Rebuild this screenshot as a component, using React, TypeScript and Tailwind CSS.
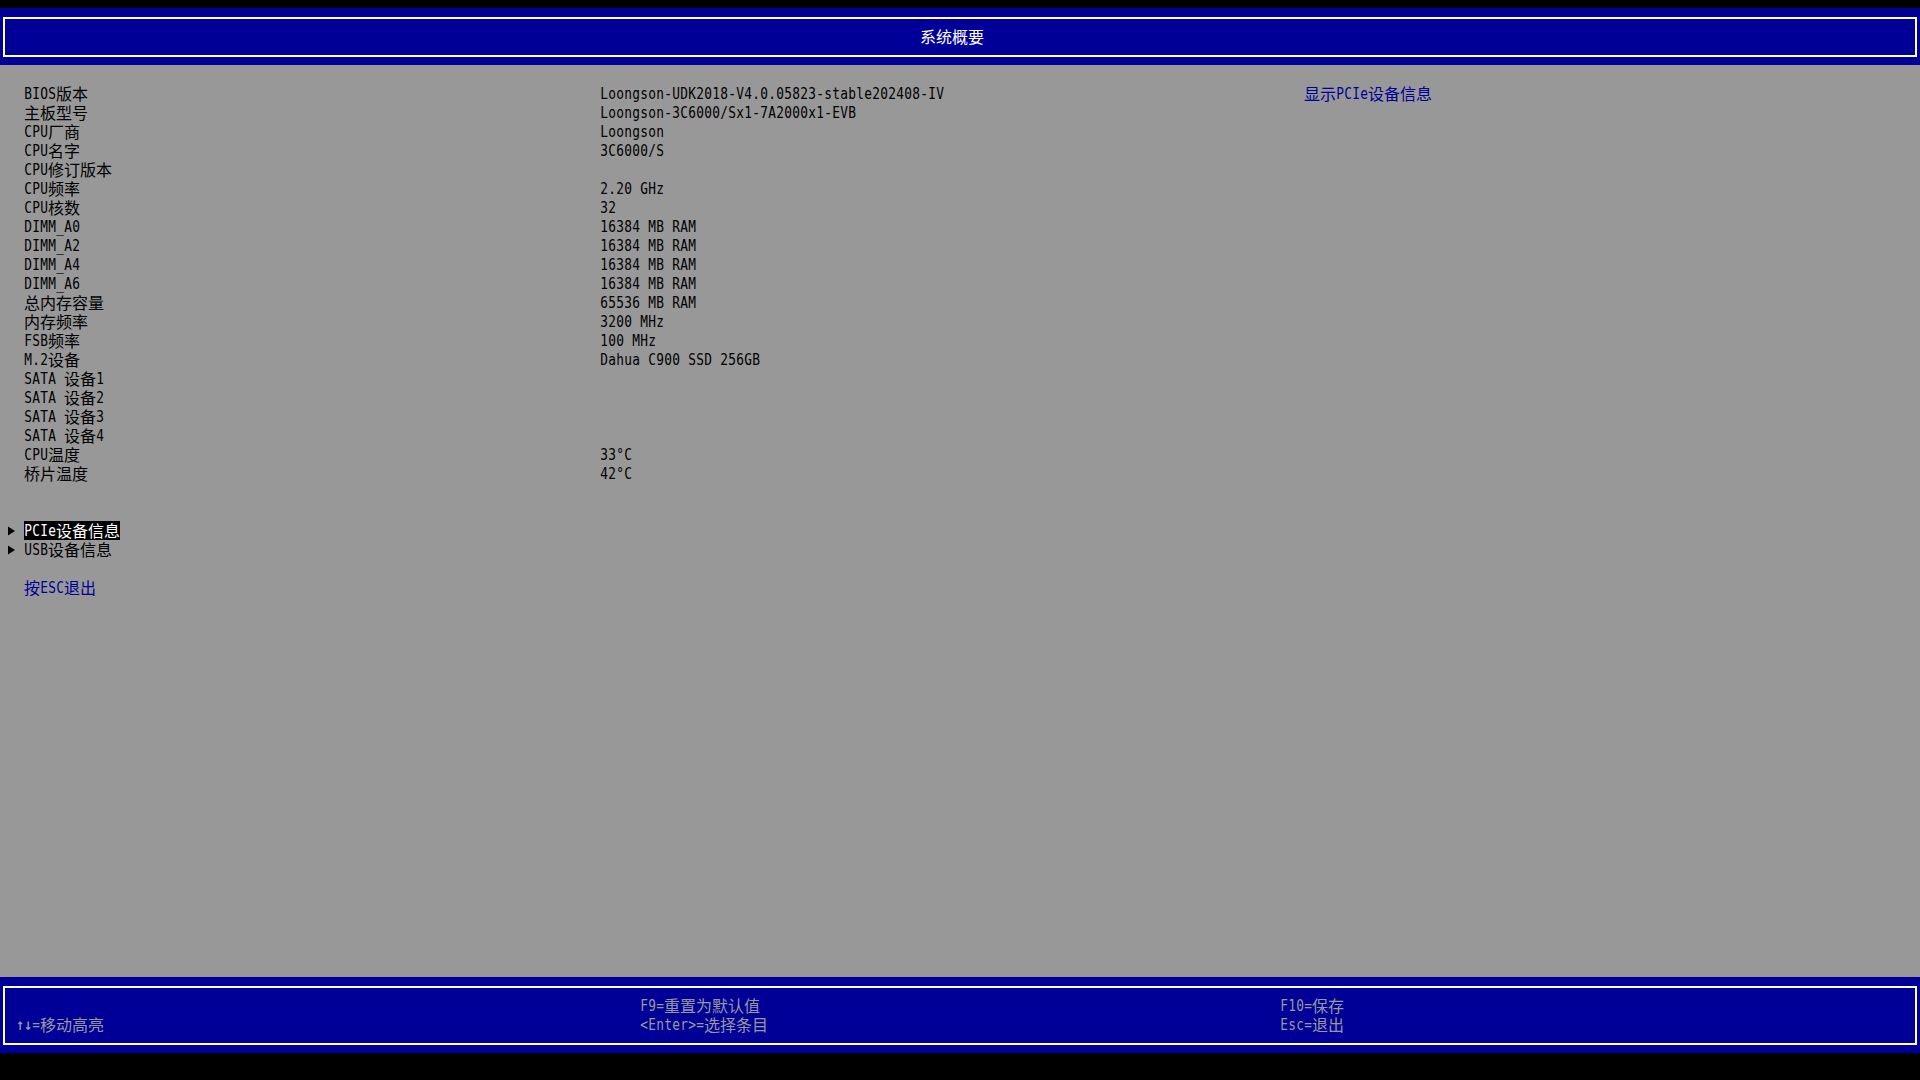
import React from 'react';

// UEFI text console: 8x19 narrow cells, 16x19 wide cells (CJK)
const isWide = (ch: string) => /[\u2e80-\u9fff\uff00-\uffef]/.test(ch);

function Txt({ s }: { s: string }) {
  return (
    <>
      {Array.from(s).map((ch, i) =>
        isWide(ch) ? (
          <span
            key={i}
            className="inline-flex h-[19px] w-4 shrink-0 justify-center font-['Noto_Sans_CJK_SC',sans-serif] text-[16px] leading-[19px]"
          >
            {ch}
          </span>
        ) : (
          <span
            key={i}
            className={`inline-flex h-[19px] w-2 shrink-0 justify-center whitespace-pre scale-x-80 font-['DejaVu_Sans_Mono',monospace] text-[16px] leading-[19px] ${
              ch === '↑' || ch === '↓' ? 'font-bold' : ''
            }`}
          >
            {ch}
          </span>
        )
      )}
    </>
  );
}

function Line({ s, className = '' }: { s: string; className?: string }) {
  return (
    <div className={`flex h-[19px] ${className}`}>
      <Txt s={s} />
    </div>
  );
}

const info: [string, string][] = [
  ['BIOS版本', 'Loongson-UDK2018-V4.0.05823-stable202408-IV'],
  ['主板型号', 'Loongson-3C6000/Sx1-7A2000x1-EVB'],
  ['CPU厂商', 'Loongson'],
  ['CPU名字', '3C6000/S'],
  ['CPU修订版本', ''],
  ['CPU频率', '2.20 GHz'],
  ['CPU核数', '32'],
  ['DIMM_A0', '16384 MB RAM'],
  ['DIMM_A2', '16384 MB RAM'],
  ['DIMM_A4', '16384 MB RAM'],
  ['DIMM_A6', '16384 MB RAM'],
  ['总内存容量', '65536 MB RAM'],
  ['内存频率', '3200 MHz'],
  ['FSB频率', '100 MHz'],
  ['M.2设备', 'Dahua C900 SSD 256GB'],
  ['SATA 设备1', ''],
  ['SATA 设备2', ''],
  ['SATA 设备3', ''],
  ['SATA 设备4', ''],
  ['CPU温度', '33°C'],
  ['桥片温度', '42°C'],
];

const menu = [
  { label: 'PCIe设备信息', active: true },
  { label: 'USB设备信息', active: false },
];

export default function App() {
  return (
    <div className="h-[1080px] w-[1920px] overflow-hidden bg-black pt-2">
      {/* Title bar */}
      <div className="bg-[#000098] px-[3px] pt-[9px] pb-[8px]">
        <div className="flex h-[40px] border-2 border-white pl-[915px] pt-[8px] text-white">
          <Txt s="系统概要" />
        </div>
      </div>

      {/* Form body */}
      <div className="h-[912px] bg-[#989898] pt-[19px] text-black">
        <div className="flex pl-6">
          <div className="flex w-[1280px] flex-col">
            {info.map(([k, v]) => (
              <div key={k} className="flex h-[19px]">
                <div className="flex w-[576px]">
                  <Txt s={k} />
                </div>
                <div className="flex">
                  <Txt s={v} />
                </div>
              </div>
            ))}
          </div>
          <Line s="显示PCIe设备信息" className="text-[#000098]" />
        </div>

        <div className="mt-[38px] flex flex-col pl-2">
          {menu.map((m) => (
            <div key={m.label} className="flex h-[19px]">
              <svg width="16" height="19" viewBox="0 0 16 19" className="shrink-0">
                <polygon points="0,5.5 7,10 0,14.5" fill="#000" />
              </svg>
              <div className={`flex ${m.active ? 'bg-black text-white' : ''}`}>
                <Txt s={m.label} />
              </div>
            </div>
          ))}
        </div>

        <Line s="按ESC退出" className="mt-[19px] pl-6 text-[#000098]" />
      </div>

      {/* Help bar */}
      <div className="bg-[#000098] px-[3px] pt-[9px] pb-[8px]">
        <div className="grid h-[59px] grid-cols-[624px_640px_1fr] border-2 border-white pl-[11px] pt-[8px] text-[#989898]">
          <div className="flex flex-col">
            <div className="h-[19px]" />
            <Line s="↑↓=移动高亮" />
          </div>
          <div className="flex flex-col">
            <Line s="F9=重置为默认值" />
            <Line s="<Enter>=选择条目" />
          </div>
          <div className="flex flex-col">
            <Line s="F10=保存" />
            <Line s="Esc=退出" />
          </div>
        </div>
      </div>
    </div>
  );
}
